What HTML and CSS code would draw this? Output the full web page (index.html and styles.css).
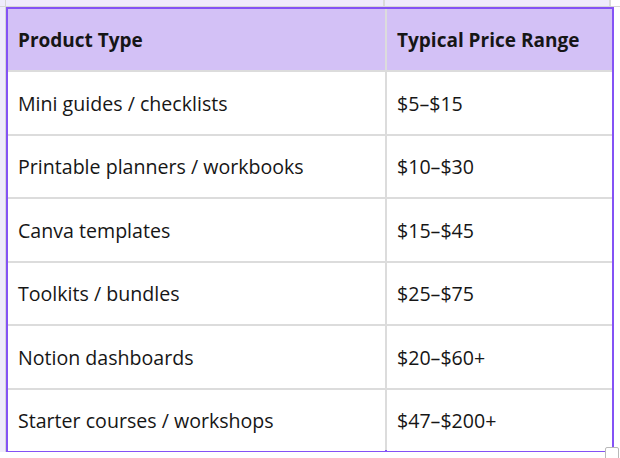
FILE: index.html
```html
<!DOCTYPE html>
<html>
<head>
<meta charset="utf-8">
<link rel="stylesheet" href="styles.css">
</head>
<body>
<div class="page">
  <div class="corner"></div>
  <div class="top-strip"><div class="ts-a"></div><div class="ts-b"></div><div class="ts-c"></div></div>
  <div class="left-strip"></div>
  <div class="frame">
    <div class="table">
      <div class="cell head">Product Type</div>
      <div class="cell head">Typical Price Range</div>
      <div class="cell">Mini guides / checklists</div>
      <div class="cell">$5–$15</div>
      <div class="cell">Printable planners / workbooks</div>
      <div class="cell">$10–$30</div>
      <div class="cell">Canva templates</div>
      <div class="cell">$15–$45</div>
      <div class="cell">Toolkits / bundles</div>
      <div class="cell">$25–$75</div>
      <div class="cell">Notion dashboards</div>
      <div class="cell">$20–$60+</div>
      <div class="cell">Starter courses / workshops</div>
      <div class="cell">$47–$200+</div>
    </div>
    <div class="handle"></div>
  </div>
</div>
</body>
</html>
```
FILE: styles.css
```css
html, body {
  margin: 0;
  padding: 0;
  background: #ffffff;
}
.page {
  display: grid;
  grid-template-columns: 6px 608px 6px;
  grid-template-rows: 7px 445px 6px;
  width: 620px;
  height: 458px;
  overflow: hidden;
}
.corner {
  background: #efebfc;
  border-right: 1px solid #d6d6d6;
  border-bottom: 1px solid #d6d6d6;
  box-sizing: border-box;
}
.top-strip {
  grid-column: 2 / 4;
  display: grid;
  grid-template-columns: 379px 226px 1fr;
  border-bottom: 1px solid #d6d6d6;
  box-sizing: border-box;
}
.ts-a, .ts-b {
  background: #efebfc;
  border-right: 2px solid #dadada;
}
.ts-c { background: #ffffff; }
.left-strip {
  background: #efebfc;
  border-right: 1px solid #d6d6d6;
  box-sizing: border-box;
}
.frame {
  position: relative;
}
.table {
  box-sizing: border-box;
  width: 608px;
  height: 445px;
  border: 2px solid #8452f5;
  display: grid;
  grid-template-columns: 377px 1fr;
  grid-template-rows: 61px repeat(6, 61.5px);
  gap: 2px;
  background: #dcdcdc;
  font-family: "Open Sans", "Liberation Sans", sans-serif;
  font-size: 19.6px;
  color: #161616;
}
.cell {
  background: #ffffff;
  display: flex;
  align-items: center;
  padding-left: 10px;
  padding-top: 1px;
}
.cell.head {
  background: #d3c1f6;
  font-weight: 700;
  font-size: 19px;
}
.handle {
  position: absolute;
  right: -5px;
  bottom: -9px;
  width: 12px;
  height: 12px;
  background: #ffffff;
  border: 1px solid #b9b9b9;
  border-radius: 2px;
}
```
